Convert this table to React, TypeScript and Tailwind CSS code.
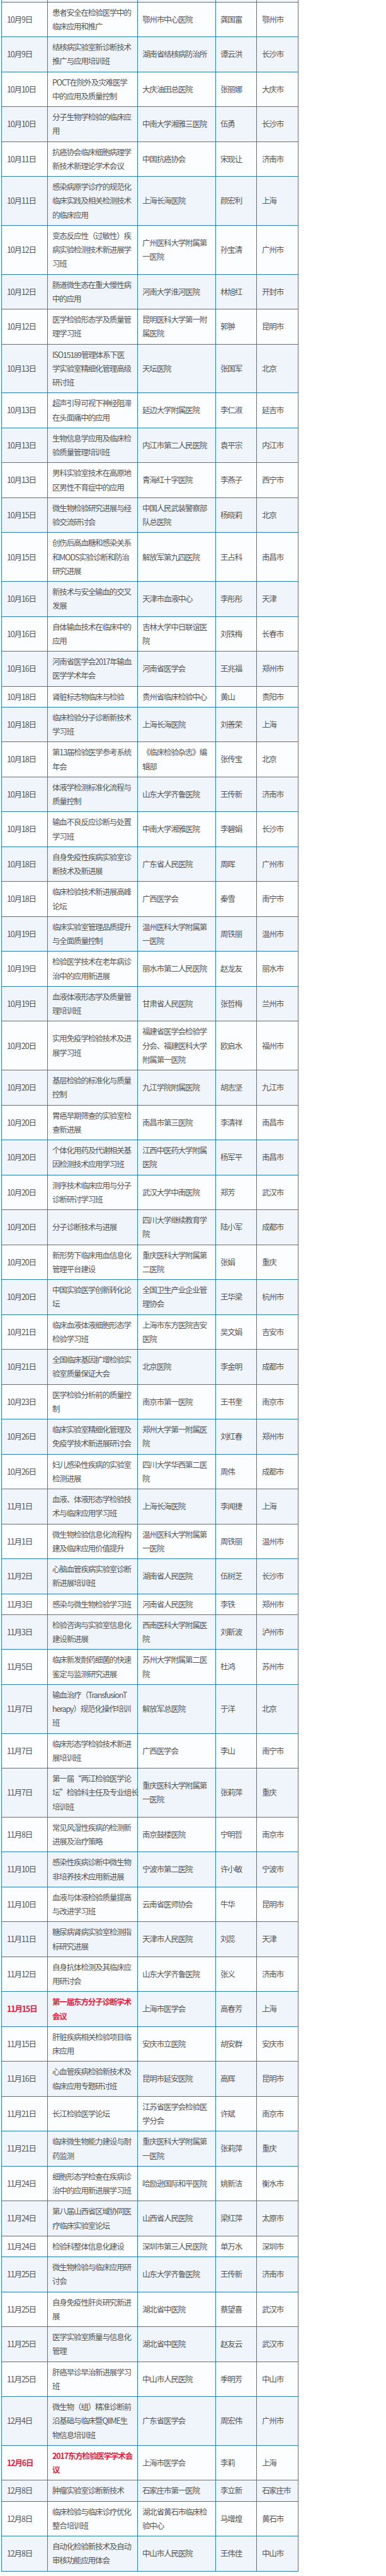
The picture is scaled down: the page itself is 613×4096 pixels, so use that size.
import React from "react";

type Row = [string, string, string, string, string, boolean?];

const rows: Row[] = [
  ["10月9日", "患者安全在检验医学中的|临床应用和推广", "鄂州市中心医院", "龚国富", "鄂州市"],
  ["10月9日", "结核病实验室新诊断技术|推广与应用培训班", "湖南省结核病防治所", "谭云洪", "长沙市"],
  ["10月10日", "POCT在院外及灾难医学|中的应用及质量控制", "大庆油田总医院", "张丽娜", "大庆市"],
  ["10月10日", "分子生物学检验的临床应|用", "中南大学湘雅三医院", "伍勇", "长沙市"],
  ["10月11日", "抗癌协会临床细胞病理学|新技术新理论学术会议", "中国抗癌协会", "宋现让", "济南市"],
  ["10月11日", "感染病原学诊疗的规范化|临床实践及相关检测技术|的临床应用", "上海长海医院", "颜宏利", "上海"],
  ["10月12日", "变态反应性（过敏性）疾|病实验检测技术新进展学|习班", "广州医科大学附属第|一医院", "孙宝清", "广州市"],
  ["10月12日", "肠道微生态在重大慢性病|中的应用", "河南大学淮河医院", "林旭红", "开封市"],
  ["10月12日", "医学检验形态学及质量管|理学习班", "昆明医科大学第一附|属医院", "郭翀", "昆明市"],
  ["10月13日", "ISO15189管理体系下医|学实验室精细化管理高级|研讨班", "天坛医院", "张国军", "北京"],
  ["10月13日", "超声引导可视下神经阻滞|在头面痛中的应用", "延边大学附属医院", "李仁淑", "延吉市"],
  ["10月13日", "生物信息学应用及临床检|验质量管理培训班", "内江市第二人民医院", "袁平宗", "内江市"],
  ["10月13日", "男科实验室技术在高原地|区男性不育症中的应用", "青海红十字医院", "李燕子", "西宁市"],
  ["10月15日", "微生物检验研究进展与经|验交流研讨会", "中国人民武装警察部|队总医院", "杨晓莉", "北京"],
  ["10月15日", "创伤后高血糖和感染关系|和MODS实验诊断和防治|研究进展", "解放军第九四医院", "王占科", "南昌市"],
  ["10月16日", "新技术与安全输血的交叉|发展", "天津市血液中心", "李彤彤", "天津"],
  ["10月16日", "自体输血技术在临床中的|应用", "吉林大学中日联谊医|院", "刘铁梅", "长春市"],
  ["10月16日", "河南省医学会2017年输血|医学学术年会", "河南省医学会", "王兆福", "郑州市"],
  ["10月18日", "肾脏标志物临床与检验", "贵州省临床检验中心", "黄山", "贵阳市"],
  ["10月18日", "临床检验分子诊断新技术|学习班", "上海长海医院", "刘善荣", "上海"],
  ["10月18日", "第13届检验医学参考系统|年会", "《临床检验杂志》编|辑部", "张传宝", "北京"],
  ["10月18日", "体液学检测标准化流程与|质量控制", "山东大学齐鲁医院", "王传新", "济南市"],
  ["10月18日", "输血不良反应诊断与处置|学习班", "中南大学湘雅医院", "李碧娟", "长沙市"],
  ["10月18日", "自身免疫性疾病实验室诊|断技术及新进展", "广东省人民医院", "周晖", "广州市"],
  ["10月18日", "临床检验技术新进展高峰|论坛", "广西医学会", "秦雪", "南宁市"],
  ["10月19日", "临床实验室管理品质提升|与全面质量控制", "温州医科大学附属第|一医院", "周铁丽", "温州市"],
  ["10月19日", "检验医学技术在老年病诊|治中的应用新进展", "丽水市第二人民医院", "赵龙友", "丽水市"],
  ["10月19日", "血液体液形态学及质量管|理培训班", "甘肃省人民医院", "张哲梅", "兰州市"],
  ["10月20日", "实用免疫学检验技术及进|展学习班", "福建省医学会检验学|分会、福建医科大学|附属第一医院", "欧启水", "福州市"],
  ["10月20日", "基层检验的标准化与质量|控制", "九江学院附属医院", "胡志坚", "九江市"],
  ["10月20日", "胃癌早期筛查的实验室检|查新进展", "南昌市第三医院", "李清祥", "南昌市"],
  ["10月20日", "个体化用药及代谢相关基|因检测技术应用学习班", "江西中医药大学附属|医院", "杨军平", "南昌市"],
  ["10月20日", "测序技术临床应用与分子|诊断研讨学习班", "武汉大学中南医院", "郑芳", "武汉市"],
  ["10月20日", "分子诊断技术与进展", "四川大学继续教育学|院", "陆小军", "成都市"],
  ["10月20日", "新形势下临床用血信息化|管理平台建设", "重庆医科大学附属第|二医院", "张娟", "重庆"],
  ["10月20日", "中国实验医学创新转化论|坛", "全国卫生产业企业管|理协会", "王华梁", "杭州市"],
  ["10月21日", "临床血液体液细胞形态学|检验学习班", "上海市东方医院吉安|医院", "吴文娟", "吉安市"],
  ["10月21日", "全国临床基因扩增检验实|验室质量保证大会", "北京医院", "李金明", "成都市"],
  ["10月23日", "医学检验分析前的质量控|制", "南京市第一医院", "王书奎", "南京市"],
  ["10月26日", "临床实验室精细化管理及|免疫学技术新进展研讨会", "郑州大学第一附属医|院", "刘红春", "郑州市"],
  ["10月26日", "妇儿感染性疾病的实验室|检测进展", "四川大学华西第二医|院", "周伟", "成都市"],
  ["11月1日", "血液、体液形态学检验技|术与临床应用学习班", "上海长海医院", "李闻捷", "上海"],
  ["11月1日", "微生物检验信息化流程构|建及临床应用价值提升", "温州医科大学附属第|一医院", "周铁丽", "温州市"],
  ["11月2日", "心脑血管疾病实验室诊断|新进展培训班", "湖南省人民医院", "伍树芝", "长沙市"],
  ["11月3日", "感染与微生物检验学习班", "河南省人民医院", "李铁", "郑州市"],
  ["11月3日", "检验咨询与实验室信息化|建设新进展", "西南医科大学附属医|院", "刘靳波", "泸州市"],
  ["11月5日", "临床新发耐药细菌的快速|鉴定与监测研究进展", "苏州大学附属第二医|院", "杜鸿", "苏州市"],
  ["11月7日", "输血治疗（TransfusionT|herapy）规范化操作培训|班", "解放军总医院", "于洋", "北京"],
  ["11月7日", "临床形态学检验技术新进|展培训班", "广西医学会", "李山", "南宁市"],
  ["11月7日", "第一届“两江检验医学论|坛”检验科主任及专业组长|培训班", "重庆医科大学附属第|一医院", "张莉萍", "重庆"],
  ["11月8日", "常见风湿性疾病的检测新|进展及治疗策略", "南京鼓楼医院", "宁明哲", "南京市"],
  ["11月10日", "感染性疾病诊断中微生物|非培养技术应用新进展", "宁波市第二医院", "许小敏", "宁波市"],
  ["11月10日", "血液与体液检验质量提高|与改进学习班", "云南省医师协会", "牛华", "昆明市"],
  ["11月11日", "糖尿病肾病实验室检测指|标研究进展", "天津市人民医院", "刘蕊", "天津"],
  ["11月12日", "自身抗体检测及其临床应|用研讨会", "山东大学齐鲁医院", "张义", "济南市"],
  ["11月15日", "第一届东方分子诊断学术|会议", "上海市医学会", "高春芳", "上海", true],
  ["11月15日", "肝脏疾病相关检验项目临|床应用", "安庆市立医院", "胡安群", "安庆市"],
  ["11月16日", "心血管疾病检验新技术及|临床应用专题研讨班", "昆明市延安医院", "高辉", "昆明市"],
  ["11月21日", "长江检验医学论坛", "江苏省医学会检验医|学分会", "许斌", "南京市"],
  ["11月21日", "临床微生物能力建设与耐|药监测", "重庆医科大学附属第|一医院", "张莉萍", "重庆"],
  ["11月24日", "细胞形态学检查在疾病诊|治中的应用新进展学习班", "哈励逊国际和平医院", "姚新洁", "衡水市"],
  ["11月24日", "第八届山西省区域协同医|疗临床实验室论坛", "山西省人民医院", "梁红萍", "太原市"],
  ["11月24日", "检验科整体信息化建设", "深圳市第三人民医院", "单万水", "深圳市"],
  ["11月25日", "微生物检验与临床应用研|讨会", "山东大学齐鲁医院", "王传新", "济南市"],
  ["11月25日", "自身免疫性肝炎研究新进|展", "湖北省中医院", "蔡望喜", "武汉市"],
  ["11月25日", "医学实验室质量与信息化|管理", "湖北省中医院", "赵友云", "武汉市"],
  ["11月25日", "肝癌早诊早治新进展学习|班", "中山市人民医院", "季明芳", "中山市"],
  ["12月4日", "微生物（组）精准诊断前|沿基础与临床暨QIIME生|物信息培训班", "广东省医学会", "周宏伟", "广州市"],
  ["12月6日", "2017东方检验医学学术会|议", "上海市医学会", "李莉", "上海", true],
  ["12月8日", "肿瘤实验室诊断新技术", "石家庄市第一医院", "李立新", "石家庄市"],
  ["12月8日", "临床检验与临床诊疗优化|整合培训班", "湖北省黄石市临床检|验中心", "马增煌", "黄石市"],
  ["12月8日", "自动化检验新技术及自动|审核功能应用体会", "中山市人民医院", "王伟佳", "中山市"],
];

function Lines({ text }: { text: string }) {
  return (
    <>
      {text.split("|").map((l, i) => (
        <div key={i} className="whitespace-nowrap">
          {l}
        </div>
      ))}
    </>
  );
}

const td =
  "border border-[#2a80b6] align-middle py-[5px] leading-[22.25px] text-[12.5px] tracking-[-1.15px]";

export default function App() {
  return (
    <div className="w-[613px] bg-white font-['Noto_Sans_CJK_SC','Noto_Sans',sans-serif] text-[#555555]">
      <table className="ml-[2px] w-[471px] table-fixed border-collapse">
        <colgroup>
          <col className="w-[73px]" />
          <col className="w-[143px]" />
          <col className="w-[124px]" />
          <col className="w-[65px]" />
          <col className="w-[66px]" />
        </colgroup>
        <tbody>
          <tr className="h-[3px] bg-[#f0f6fc]">
            <td className="border-x border-b border-[#2a80b6] p-0"></td>
            <td className="border-x border-b border-[#2a80b6] p-0"></td>
            <td className="border-x border-b border-[#2a80b6] p-0"></td>
            <td className="border-x border-b border-[#2a80b6] p-0"></td>
            <td className="border-x border-b border-[#2a80b6] p-0"></td>
          </tr>
          {rows.map((r, i) => {
            const red = !!r[5];
            const bg = i % 2 === 0 ? "bg-[#fcfdff]" : "bg-[#eff5fb]";
            const strong = red ? "text-[#e41c40] font-bold" : "";
            return (
              <tr key={i} className={bg}>
                <td className={`${td} pl-[8px] pr-[2px] whitespace-nowrap ${strong}`}>{r[0]}</td>
                <td className={`${td} pl-[7px] pr-[2px] ${strong}`}>
                  <Lines text={r[1]} />
                </td>
                <td className={`${td} pl-[7px] pr-[2px]`}>
                  <Lines text={r[2]} />
                </td>
                <td className={`${td} pl-[7px] pr-[2px] whitespace-nowrap`}>{r[3]}</td>
                <td className={`${td} pl-[8px] pr-[2px] whitespace-nowrap`}>{r[4]}</td>
              </tr>
            );
          })}
        </tbody>
      </table>
      <div className="h-[6px]"></div>
    </div>
  );
}
